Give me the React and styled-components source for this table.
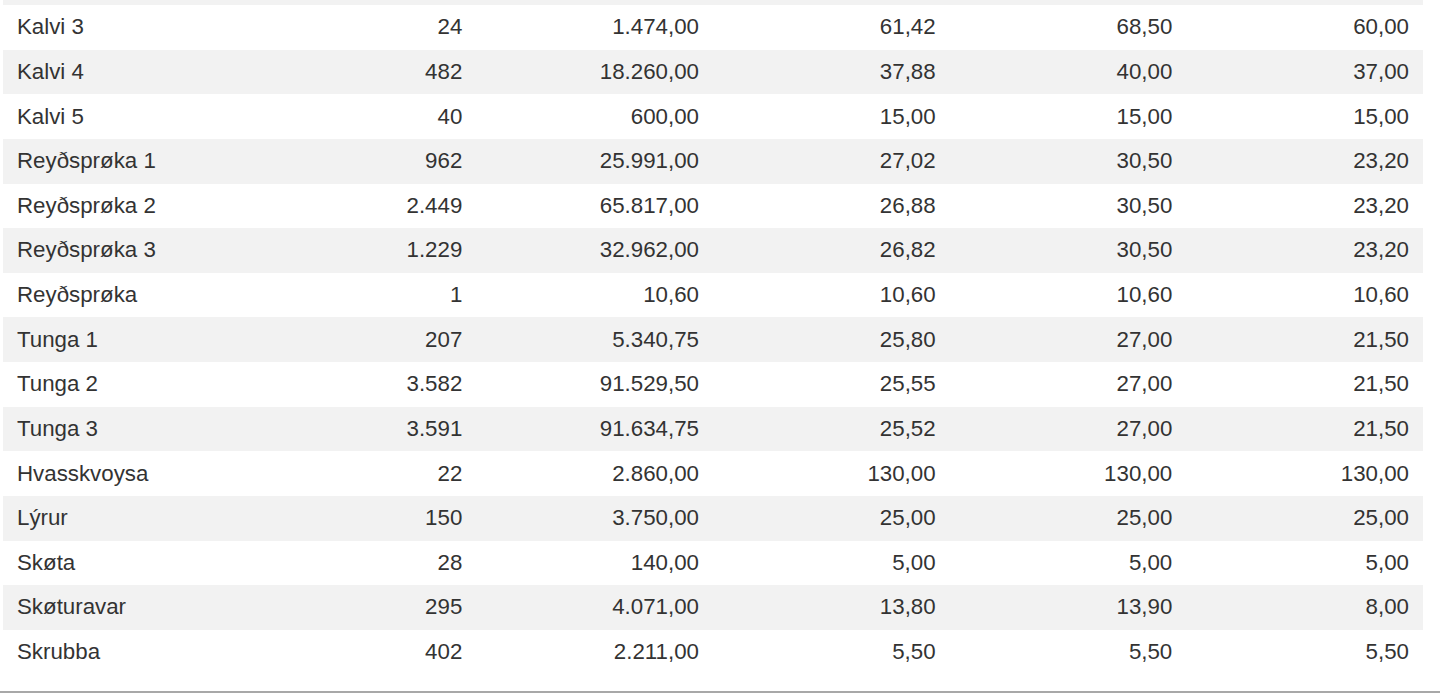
import styled, { createGlobalStyle } from 'styled-components';

const GlobalStyle = createGlobalStyle`
  body {
    margin: 0;
    background: #fff;
    font-family: "Liberation Sans", Arial, Helvetica, sans-serif;
  }
`;

const Page = styled.div`
  width: 1440px;
  height: 695px;
  overflow: hidden;
`;

const Wrap = styled.div`
  padding: 0 17px 17px 3px;
  border-bottom: 2px solid #a8a8a8;
`;

const Table = styled.table`
  width: 1420px;
  border-collapse: collapse;
  table-layout: fixed;
  color: #333;
  font-size: 22.3px;
`;

const Row = styled.tr`
  background: ${(p) => (p.$shade ? '#f2f2f2' : '#fff')};
`;

const Cell = styled.td`
  height: 44.64px;
  padding: 0 14px;
  box-sizing: border-box;
  vertical-align: middle;
  white-space: nowrap;
  text-align: ${(p) => (p.$num ? 'right' : 'left')};
`;

const Clip = styled.td`
  height: 5px;
  padding: 0;
`;

const rows = [
  ['Kalvi 3', '24', '1.474,00', '61,42', '68,50', '60,00'],
  ['Kalvi 4', '482', '18.260,00', '37,88', '40,00', '37,00'],
  ['Kalvi 5', '40', '600,00', '15,00', '15,00', '15,00'],
  ['Reyðsprøka 1', '962', '25.991,00', '27,02', '30,50', '23,20'],
  ['Reyðsprøka 2', '2.449', '65.817,00', '26,88', '30,50', '23,20'],
  ['Reyðsprøka 3', '1.229', '32.962,00', '26,82', '30,50', '23,20'],
  ['Reyðsprøka', '1', '10,60', '10,60', '10,60', '10,60'],
  ['Tunga 1', '207', '5.340,75', '25,80', '27,00', '21,50'],
  ['Tunga 2', '3.582', '91.529,50', '25,55', '27,00', '21,50'],
  ['Tunga 3', '3.591', '91.634,75', '25,52', '27,00', '21,50'],
  ['Hvasskvoysa', '22', '2.860,00', '130,00', '130,00', '130,00'],
  ['Lýrur', '150', '3.750,00', '25,00', '25,00', '25,00'],
  ['Skøta', '28', '140,00', '5,00', '5,00', '5,00'],
  ['Skøturavar', '295', '4.071,00', '13,80', '13,90', '8,00'],
  ['Skrubba', '402', '2.211,00', '5,50', '5,50', '5,50'],
];

const App = () => {
  return (
    <>
      <GlobalStyle />
      <Page>
        <Wrap>
          <Table>
            <tbody>
              <Row $shade>
                <Clip colSpan={6} />
              </Row>
              {rows.map((r, i) => (
                <Row key={r[0]} $shade={i % 2 === 1}>
                  {r.map((v, j) => (
                    <Cell key={j} $num={j > 0}>
                      {v}
                    </Cell>
                  ))}
                </Row>
              ))}
            </tbody>
          </Table>
        </Wrap>
      </Page>
    </>
  );
};

export default App;
